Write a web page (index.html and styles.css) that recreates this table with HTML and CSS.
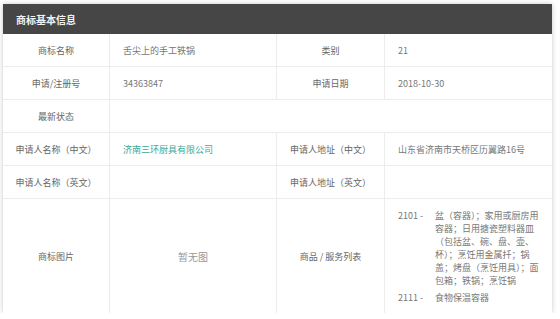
FILE: index.html
```html
<!DOCTYPE html>
<html lang="zh-CN">
<head>
<meta charset="utf-8">
<link rel="stylesheet" href="styles.css">
</head>
<body>
<section class="card">
  <header class="card-head">商标基本信息</header>
  <div class="grid">
    <div class="cell label">商标名称</div>
    <div class="cell value">舌尖上的手工铁锅</div>
    <div class="cell label">类别</div>
    <div class="cell value last">21</div>

    <div class="cell label">申请/注册号</div>
    <div class="cell value">34363847</div>
    <div class="cell label">申请日期</div>
    <div class="cell value last">2018-10-30</div>

    <div class="cell label">最新状态</div>
    <div class="cell value span3 last"></div>

    <div class="cell label">申请人名称（中文）</div>
    <div class="cell value"><a class="link" href="#">济南三环厨具有限公司</a></div>
    <div class="cell label">申请人地址（中文）</div>
    <div class="cell value last">山东省济南市天桥区历翼路16号</div>

    <div class="cell label">申请人名称（英文）</div>
    <div class="cell value"></div>
    <div class="cell label">申请人地址（英文）</div>
    <div class="cell value last"></div>

    <div class="cell label tall">商标图片</div>
    <div class="cell value center tall">暂无图</div>
    <div class="cell label tall">商品 / 服务列表</div>
    <div class="cell value goods last tall">
      <div class="good">
        <span class="code">2101 -</span>
        <span class="desc">盆（容器）；家用或厨房用容器；日用搪瓷塑料器皿（包括盆、碗、盘、壶、杯）；烹饪用金属扦；锅盖；烤盘（烹饪用具）；面包箱；铁锅；烹饪锅</span>
      </div>
      <div class="good">
        <span class="code">2111 -</span>
        <span class="desc">食物保温容器</span>
      </div>
    </div>
  </div>
</section>
</body>
</html>
```

FILE: styles.css
```css
html, body {
  margin: 0;
  padding: 0;
  background: #ffffff;
}
body {
  font-family: "Noto Sans CJK SC", "Noto Sans", sans-serif;
  font-size: 9px;
  color: #777;
}
.card {
  width: 549px;
  margin: 4px 0 0 3px;
  background: #fff;
  box-shadow: 0 0 5px rgba(0, 0, 0, 0.22);
}
.card-head {
  height: 30px;
  box-sizing: border-box;
  padding-left: 13px;
  display: flex;
  align-items: center;
  background: #464646;
  color: #f2f2f2;
  font-size: 10px;
  font-weight: bold;
}
.grid {
  display: grid;
  grid-template-columns: 107px 167px 108px 167px;
}
.cell {
  box-sizing: border-box;
  min-height: 33px;
  border-bottom: 1px solid #ececec;
  border-right: 1px solid #ececec;
  display: flex;
  align-items: center;
}
.cell.last {
  border-right: none;
}
.label {
  justify-content: center;
  color: #666;
}
.value {
  padding: 0 13px;
  color: #777;
}
.span3 {
  grid-column: span 3;
}
.link {
  color: #3ba99a;
  text-decoration: none;
}
.tall {
  border-bottom: none;
}
.center {
  justify-content: center;
  color: #999;
  font-size: 10px;
}
.goods {
  flex-direction: column;
  align-items: flex-start;
  padding: 10px 13px 9px;
}
.good {
  display: flex;
  line-height: 13px;
}
.good + .good {
  margin-top: 4px;
}
.code {
  width: 37px;
  flex: none;
  white-space: pre;
}
.desc {
  width: 110px;
}
```
